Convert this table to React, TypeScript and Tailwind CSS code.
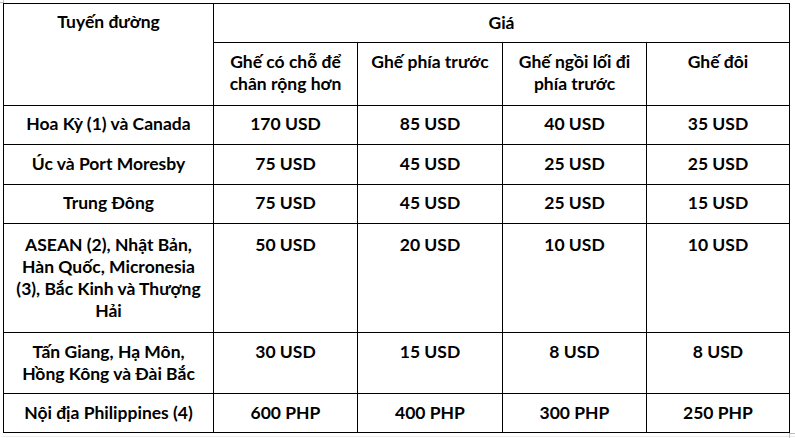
import React from "react";

const font = { fontFamily: "Lato, 'Noto Sans', sans-serif" };

type Row = { route: React.ReactNode; pt: string; v: string[] };

const rows: Row[] = [
  { route: "Hoa Kỳ (1) và Canada", pt: "pt-[7px]", v: ["170 USD", "85 USD", "40 USD", "35 USD"] },
  { route: "Úc và Port Moresby", pt: "pt-[8px]", v: ["75 USD", "45 USD", "25 USD", "25 USD"] },
  { route: "Trung Đông", pt: "pt-[7px]", v: ["75 USD", "45 USD", "25 USD", "15 USD"] },
  {
    route: (
      <>
        ASEAN (2), Nhật Bản,
        <br />
        Hàn Quốc, Micronesia
        <br />
        (3), Bắc Kinh và Thượng
        <br />
        Hải
      </>
    ),
    pt: "pt-[10px]",
    v: ["50 USD", "20 USD", "10 USD", "10 USD"],
  },
  {
    route: (
      <>
        Tấn Giang, Hạ Môn,
        <br />
        Hồng Kông và Đài Bắc
      </>
    ),
    pt: "pt-[8px]",
    v: ["30 USD", "15 USD", "8 USD", "8 USD"],
  },
  { route: "Nội địa Philippines (4)", pt: "pt-[8px]", v: ["600 PHP", "400 PHP", "300 PHP", "250 PHP"] },
];

export default function App() {
  const cell = "bg-white text-center whitespace-nowrap";
  return (
    <div className="relative w-[795px] h-[438px] bg-white overflow-hidden text-black font-bold text-[17.5px] leading-[22px]" style={font}>
      <div className="absolute left-0 top-[2px] w-[3px] h-px bg-[#bdbdbd]" />
      <div className="absolute left-[3px] top-0 w-px h-[3px] bg-[#bdbdbd]" />
      <div className="absolute left-[789px] top-[433px] w-px h-[5px] bg-[#bdbdbd]" />
      <div className="absolute left-[789px] top-[433px] w-[6px] h-px bg-[#bdbdbd]" />
      <div className="pt-[3px] pl-[3px]">
        <div className="grid w-[787px] grid-cols-[209px_143px_144px_143px_142px] grid-rows-[38px_62px_38px_39px_38px_108px_60px_38px] gap-px bg-black p-px">
          <div className={`${cell} row-span-2 pt-[7px]`}>Tuyến đường</div>
          <div className={`${cell} col-span-4 pt-[8px]`}>Giá</div>
          <div className={`${cell} pt-[8px]`}>
            Ghế có chỗ để
            <br />
            chân rộng hơn
          </div>
          <div className={`${cell} pt-[8px]`}>Ghế phía trước</div>
          <div className={`${cell} pt-[8px]`}>
            Ghế ngồi lối đi
            <br />
            phía trước
          </div>
          <div className={`${cell} pt-[8px]`}>Ghế đôi</div>
          {rows.map((r, i) => (
            <React.Fragment key={i}>
              <div className={`${cell} ${r.pt}`}>{r.route}</div>
              {r.v.map((x, j) => (
                <div key={j} className={`${cell} ${r.pt}`}>
                  {x}
                </div>
              ))}
            </React.Fragment>
          ))}
        </div>
        <div className="mt-[3px] h-px w-full bg-[#ececec]" />
      </div>
    </div>
  );
}
